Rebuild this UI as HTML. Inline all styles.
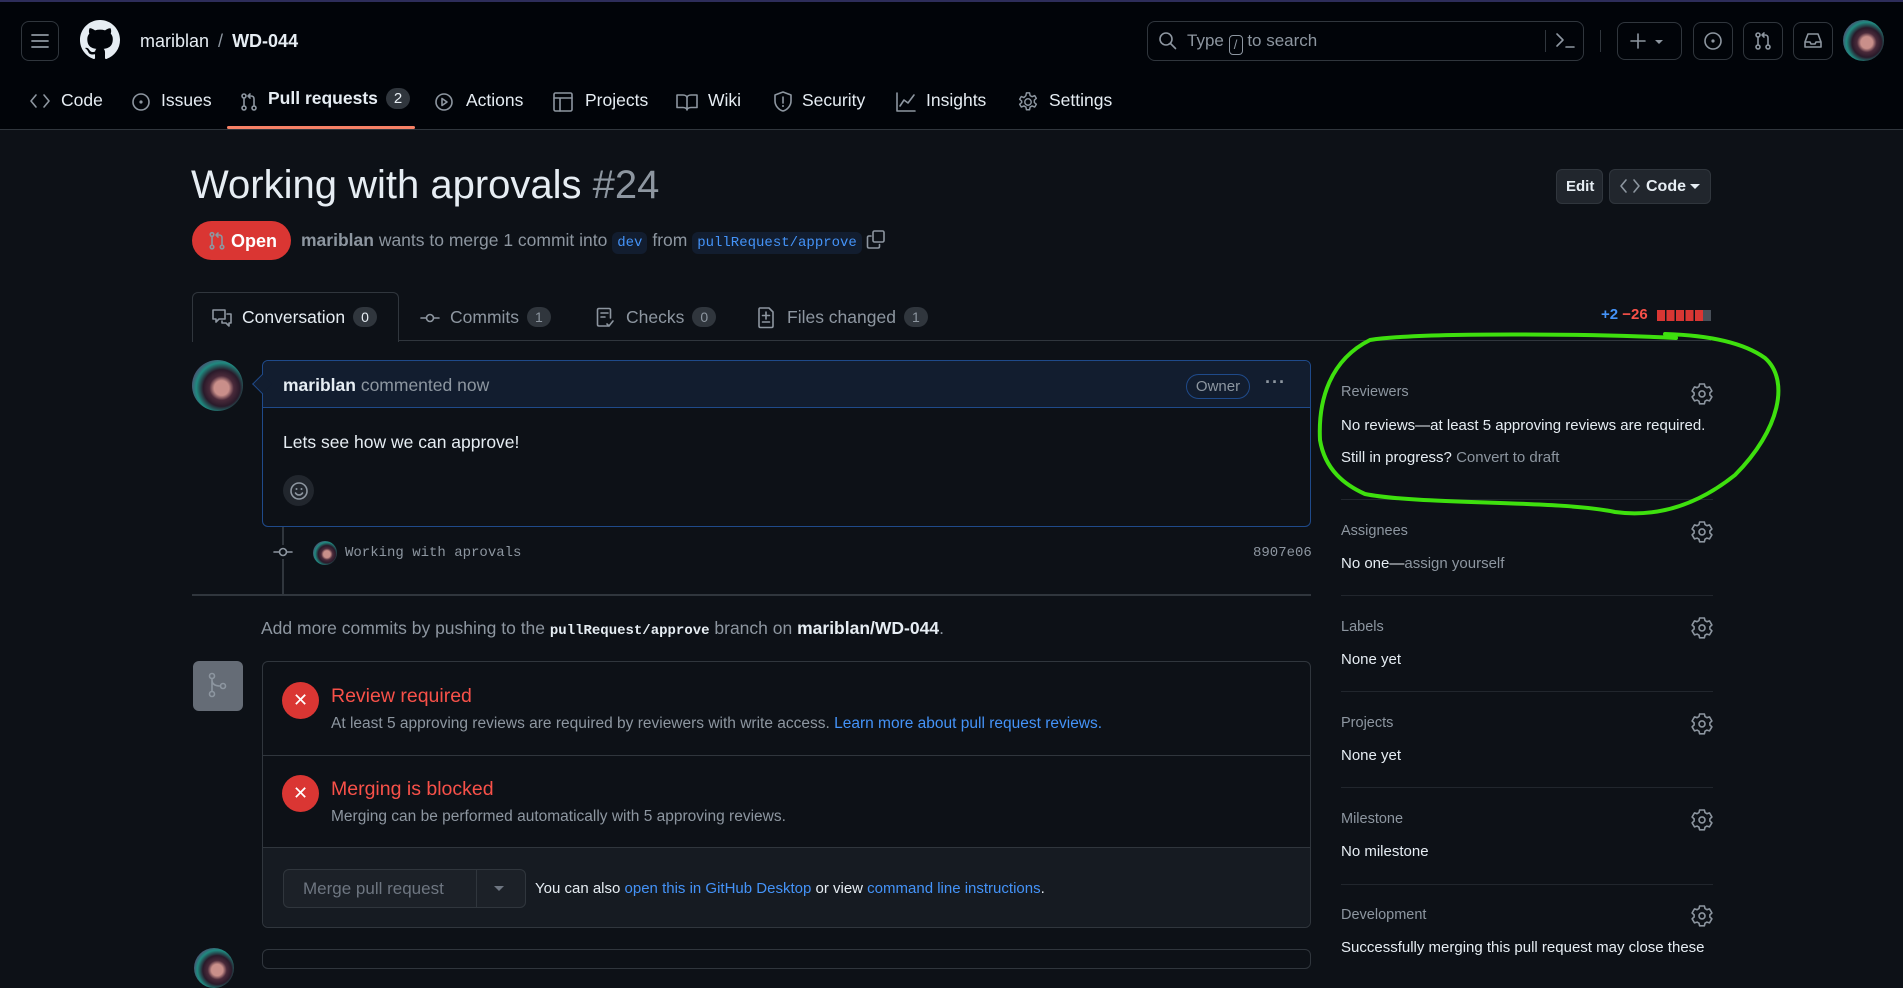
<!DOCTYPE html>
<html><head><meta charset="utf-8">
<style>
*{box-sizing:border-box;margin:0;padding:0}
body{width:1903px;height:957px;overflow:hidden;background:#0d1117;color:#e6edf3;font-family:"Liberation Sans",sans-serif;position:relative}
.a{position:absolute;white-space:nowrap}
.hdr{position:absolute;left:0;top:0;width:1903px;height:130px;background:#010409;border-bottom:1px solid #30363d;border-top:2px solid #2d2d5a}
.btn{position:absolute;border:1px solid #30363d;border-radius:8px}
svg{position:absolute;overflow:visible}
.nav{position:absolute;top:90px;font-size:17.5px;color:#e6edf3}
.ic{stroke:#8d96a0;fill:none;stroke-width:1.6;stroke-linecap:round;stroke-linejoin:round}
.cnt{display:inline-block;background:#30363d;color:#e6edf3;border-radius:12px;font-size:14px;padding:2px 8px;margin-left:8px;vertical-align:1px}
.sh{position:absolute;left:1341px;font-size:14.5px;color:#8d96a0}
.st{position:absolute;left:1341px;font-size:15px;color:#e6edf3}
.div{position:absolute;left:1341px;width:372px;height:1px;background:#21262d}
.gear{position:absolute;left:1693px}
.mono{font-family:"Liberation Mono",monospace}
.blue{color:#4493f8}
.av{background:radial-gradient(circle at 58% 55%,#c98f8a 0 18%,#4a2a3a 30%,#2a1a2a 45%,#1f8a80 62%,#5a3a6a 80%,#2a2030 100%)}
</style></head><body>
<div class="hdr"></div>
<div class="btn" style="left:21px;top:21px;width:38px;height:40px"></div>
<svg style="left:31px;top:33px" width="18" height="16"><path d="M1 2h16M1 8h16M1 14h16" stroke="#8d96a0" stroke-width="1.8" stroke-linecap="round"/></svg>
<svg style="left:80px;top:20px" width="40" height="40" viewBox="0 0 16 16"><path fill="#e6edf3" d="M8 0C3.58 0 0 3.580 0 8c0 3.54 2.29 6.53 5.470 7.59.4.07.55-.17.55-.38 0-.19-.01-.82-.01-1.49-2.01.37-2.53-.49-2.69-.94-.09-.23-.48-.94-.82-1.130-.28-.15-.68-.52-.01-.53.63-.01 1.08.58 1.23.82.72 1.21 1.87.87 2.33.66.07-.52.28-.87.51-1.07-1.78-.2-3.64-.89-3.64-3.95 0-.87.31-1.59.82-2.15-.08-.2-.36-1.02.08-2.12 0 0 .67-.21 2.2.82.64-.18 1.32-.27 2-.27.68 0 1.36.09 2 .27 1.53-1.04 2.2-.82 2.2-.82.44 1.1.16 1.92.08 2.12.51.56.82 1.27.82 2.15 0 3.07-1.87 3.75-3.65 3.95.29.25.54.73.54 1.48 0 1.07-.01 1.93-.01 2.2 0 .21.15.46.55.38A8.013 8.013 0 0016 8c0-4.42-3.58-8-8-8z"/></svg>
<div class="a" style="left:140px;top:31px;font-size:18px">mariblan <span style="color:#8d96a0;margin:0 4px">/</span> <b>WD-044</b></div>

<div class="btn" style="left:1147px;top:21px;width:437px;height:40px"></div>
<svg style="left:1158px;top:31px" width="20" height="20"><circle cx="8" cy="8" r="6" class="ic"/><path d="M12.5 12.5l5 5" class="ic"/></svg>
<div class="a" style="left:1187px;top:31px;font-size:17px;color:#8d96a0">Type <span style="display:inline-block;border:1px solid #8d96a0;border-radius:4px;width:14px;height:20px;font-size:13px;text-align:center;vertical-align:-3px;line-height:18px">/</span> to search</div>
<div class="a" style="left:1545px;top:30px;width:1px;height:22px;background:#30363d"></div>
<svg style="left:1556px;top:33px" width="20" height="16"><path d="M1 1l6 6-6 6M10 14h8" class="ic"/></svg>
<div class="a" style="left:1600px;top:30px;width:1px;height:22px;background:#30363d"></div>
<div class="btn" style="left:1617px;top:22px;width:65px;height:38px"></div>
<svg style="left:1630px;top:33px" width="40" height="16"><path d="M8 1v14M1 8h14" class="ic"/><path d="M25 7h8l-4 4z" fill="#8d96a0"/></svg>
<div class="btn" style="left:1693px;top:22px;width:40px;height:38px"></div>
<svg style="left:1703px;top:31px" width="20" height="20"><circle cx="10" cy="10" r="8" class="ic"/><circle cx="10" cy="10" r="1.6" fill="#8d96a0"/></svg>
<div class="btn" style="left:1743px;top:22px;width:40px;height:38px"></div>
<svg style="left:1753px;top:31px" width="20" height="20"><circle cx="5" cy="4" r="2" class="ic"/><circle cx="5" cy="16" r="2" class="ic"/><circle cx="15" cy="16" r="2" class="ic"/><path d="M5 6v8M15 14V7c0-2-1-3-3-3H9M11 2L9 4l2 2" class="ic"/></svg>
<div class="btn" style="left:1793px;top:22px;width:40px;height:38px"></div>
<svg style="left:1803px;top:31px" width="20" height="20"><path d="M2 11l3-8h10l3 8v5H2zM2 11h5l1 2h4l1-2h5" class="ic"/></svg>
<div class="a av" style="left:1843px;top:20px;width:41px;height:41px;border-radius:50%"></div>

<!-- nav -->
<svg style="left:30px;top:93px" width="20" height="16"><path d="M6 2L1 8l5 6M14 2l5 6-5 6" class="ic"/></svg>
<div class="nav" style="left:61px">Code</div>
<svg style="left:131px;top:92px" width="20" height="20"><circle cx="10" cy="10" r="8" class="ic"/><circle cx="10" cy="10" r="1.6" fill="#8d96a0"/></svg>
<div class="nav" style="left:161px">Issues</div>
<svg style="left:239px;top:92px" width="20" height="20"><circle cx="5" cy="4" r="2" class="ic"/><circle cx="5" cy="16" r="2" class="ic"/><circle cx="15" cy="16" r="2" class="ic"/><path d="M5 6v8M15 14V7c0-2-1-3-3-3H9M11 2L9 4l2 2" class="ic"/></svg>
<div class="nav" style="left:268px;top:88px;font-weight:bold">Pull requests<span class="cnt" style="font-weight:normal;font-size:15px">2</span></div>
<div class="a" style="left:227px;top:126px;width:188px;height:3px;background:#f78166;border-radius:2px"></div>
<svg style="left:434px;top:92px" width="20" height="20"><circle cx="10" cy="10" r="8" class="ic"/><path d="M8 6.5v7l5-3.5z" class="ic"/></svg>
<div class="nav" style="left:466px">Actions</div>
<svg style="left:553px;top:92px" width="20" height="20"><rect x="1" y="1" width="18" height="18" rx="1.5" class="ic"/><path d="M1 6h18M7 6v13" class="ic"/></svg>
<div class="nav" style="left:585px">Projects</div>
<svg style="left:676px;top:93px" width="22" height="18"><path d="M1 2h6c2 0 4 1 4 3v12c0-1.5-2-2.5-4-2.5H1zM21 2h-6c-2 0-4 1-4 3v12c0-1.5 2-2.5 4-2.5h6z" class="ic"/></svg>
<div class="nav" style="left:708px">Wiki</div>
<svg style="left:773px;top:91px" width="20" height="22"><path d="M10 1l8 3v6c0 5-4 9-8 10-4-1-8-5-8-10V4z" class="ic"/><path d="M10 6v6" class="ic"/><circle cx="10" cy="15" r="1" fill="#8d96a0"/></svg>
<div class="nav" style="left:802px">Security</div>
<svg style="left:896px;top:92px" width="20" height="20"><path d="M1 1v18h18M4 14l4-6 4 3 6-8" class="ic"/></svg>
<div class="nav" style="left:926px">Insights</div>
<svg style="left:1017px;top:91px" width="22" height="22" viewBox="0 0 24 24"><path d="M10.3 2h3.4l.6 3 2.2 1.2 2.8-1.2 1.8 3-2.2 2 .0 2.5 2.2 2-1.8 3-2.8-1.2-2.2 1.2-.6 3h-3.4l-.6-3-2.2-1.2-2.8 1.2-1.8-3 2.2-2V11l-2.2-2 1.8-3 2.8 1.2L9.7 5z" class="ic"/><circle cx="12" cy="12" r="3.5" class="ic"/></svg>
<div class="nav" style="left:1049px">Settings</div>

<!-- title -->
<div class="a" style="left:191px;top:163px;font-size:40px;color:#e6edf3">Working with aprovals <span style="color:#8d96a0">#24</span></div>
<div class="btn" style="left:1556px;top:169px;width:47px;height:35px;background:#21262d;border-radius:6px"></div>
<div class="a" style="left:1566px;top:178px;font-size:15px;font-weight:bold">Edit</div>
<div class="btn" style="left:1609px;top:169px;width:102px;height:35px;background:#21262d;border-radius:6px"></div>
<svg style="left:1620px;top:179px" width="20" height="14"><path d="M6 1L1 7l5 6M14 1l5 6-5 6" class="ic" stroke="#e6edf3"/></svg>
<div class="a" style="left:1646px;top:178px;font-size:16px;font-weight:bold">Code</div>
<svg style="left:1690px;top:184px" width="10" height="6"><path d="M0 0h10L5 5z" fill="#e6edf3"/></svg>

<div class="a" style="left:192px;top:221px;width:99px;height:39px;background:#da3633;border-radius:20px"></div>
<svg style="left:208px;top:231px" width="18" height="20"><circle cx="4" cy="3.5" r="1.8" class="ic" stroke="#fff"/><circle cx="4" cy="16" r="1.8" class="ic" stroke="#fff"/><circle cx="14" cy="16" r="1.8" class="ic" stroke="#fff"/><path d="M4 5.5v8.5M14 14V7c0-2-1-3-3-3H8M10 2L8 4l2 2" class="ic" stroke="#fff"/></svg>
<div class="a" style="left:231px;top:231px;font-size:18px;font-weight:bold;color:#fff">Open</div>
<div class="a" style="left:301px;top:230px;font-size:17.5px;color:#8d96a0"><b style="color:#8d96a0">mariblan</b> wants to merge 1 commit into <span class="mono" style="background:#121d2f;color:#4493f8;padding:3px 5px;border-radius:6px;font-size:14px">dev</span> from <span class="mono" style="background:#121d2f;color:#4493f8;padding:3px 5px;border-radius:6px;font-size:14px">pullRequest/approve</span></div>
<svg style="left:866px;top:230px" width="20" height="20"><rect x="7" y="1" width="11" height="11" rx="1.5" class="ic"/><path d="M5 6H3c-1 0-1.5.5-1.5 1.5v9c0 1 .5 1.5 1.5 1.5h9c1 0 1.5-.5 1.5-1.5v-2" class="ic"/></svg>

<!-- tabs -->
<div class="a" style="left:192px;top:340px;width:1519px;height:1px;background:#30363d"></div>
<div class="a" style="left:192px;top:292px;width:207px;height:50px;border:1px solid #30363d;border-bottom:none;border-radius:6px 6px 0 0;background:#0d1117"></div>
<svg style="left:212px;top:308px" width="20" height="20"><path d="M1 2h12v9H7l-3 3v-3H1zM15 6h4v9h-2v3l-3-3h-4v-2" class="ic"/></svg>
<div class="a" style="left:242px;top:307px;font-size:17.5px">Conversation<span class="cnt">0</span></div>
<svg style="left:420px;top:313px" width="20" height="10"><circle cx="10" cy="5" r="3.5" class="ic"/><path d="M1 5h5.5M13.5 5H19" class="ic"/></svg>
<div class="a" style="left:450px;top:307px;font-size:17.5px;color:#8d96a0">Commits<span class="cnt" style="color:#8d96a0">1</span></div>
<svg style="left:596px;top:307px" width="20" height="22"><path d="M13 19H3c-1 0-1.5-.5-1.5-1.5V3c0-1 .5-1.5 1.5-1.5h10c1 0 1.5.5 1.5 1.5v8M5 6h7M5 10h4M11 17l2 2 4-5" class="ic"/></svg>
<div class="a" style="left:626px;top:307px;font-size:17.5px;color:#8d96a0">Checks<span class="cnt" style="color:#8d96a0">0</span></div>
<svg style="left:757px;top:307px" width="18" height="22"><path d="M3 1h9l4 4v14c0 1-.5 1.5-1.5 1.5h-11C2.5 20.5 2 20 2 19V2.5C2 1.5 2.5 1 3 1zM9 5v7M5.5 8.5h7M5.5 15h7" class="ic"/></svg>
<div class="a" style="left:787px;top:307px;font-size:17.5px;color:#8d96a0">Files changed<span class="cnt" style="color:#8d96a0">1</span></div>
<div class="a" style="left:1601px;top:306px;font-size:15px;font-weight:bold"><span style="color:#4493f8">+2</span> <span style="color:#f85149">−26</span></div>
<div class="a" style="left:1657px;top:310px;width:47px;height:11px;background:repeating-linear-gradient(90deg,#da3633 0 8px,transparent 8px 9.5px)"></div>
<div class="a" style="left:1703px;top:310px;width:8px;height:11px;background:#484f58"></div>

<!-- comment -->
<div class="a av" style="left:192px;top:360px;width:51px;height:51px;border-radius:50%"></div>
<div class="a" style="left:262px;top:360px;width:1049px;height:167px;border:1px solid #1f4a8a;border-radius:6px"></div>
<div class="a" style="left:263px;top:361px;width:1047px;height:47px;background:#121d2f;border-bottom:1px solid #1f4a8a;border-radius:6px 6px 0 0"></div>
<div class="a" style="left:255px;top:377px;width:14px;height:14px;background:#121d2f;border-left:1px solid #1f4a8a;border-bottom:1px solid #1f4a8a;transform:rotate(45deg)"></div>
<div class="a" style="left:283px;top:375px;font-size:17.5px;color:#8d96a0"><b style="color:#e6edf3">mariblan</b> commented now</div>
<div class="a" style="left:1186px;top:374px;width:64px;height:25px;border:1px solid #1f4a8a;border-radius:13px;font-size:15px;color:#8d96a0;text-align:center;line-height:23px">Owner</div>
<div class="a" style="left:1265px;top:372px;font-size:18px;color:#8d96a0;font-weight:bold;letter-spacing:1px">···</div>
<div class="a" style="left:283px;top:432px;font-size:17.5px">Lets see how we can approve!</div>
<div class="a" style="left:283px;top:475px;width:31px;height:31px;border-radius:50%;background:#21262d"></div>
<svg style="left:289px;top:481px" width="20" height="20"><circle cx="10" cy="10" r="8" class="ic"/><path d="M6.5 12c1 1.5 2 2 3.5 2s2.5-.5 3.5-2" class="ic"/><circle cx="7.5" cy="8" r="1" fill="#8d96a0"/><circle cx="12.5" cy="8" r="1" fill="#8d96a0"/></svg>

<div class="a" style="left:282px;top:527px;width:2px;height:68px;background:#30363d"></div>
<div class="a" style="left:275px;top:545px;width:16px;height:14px;background:#0d1117"></div>
<svg style="left:273px;top:546px" width="20" height="12"><circle cx="10" cy="6" r="3.5" class="ic"/><path d="M1 6h5.5M13.5 6H19" class="ic"/></svg>
<div class="a av" style="left:313px;top:541px;width:24px;height:24px;border-radius:50%"></div>
<div class="a mono" style="left:345px;top:545px;font-size:14px;color:#8d96a0">Working with aprovals</div>
<div class="a mono" style="left:1253px;top:545px;font-size:14px;color:#8d96a0">8907e06</div>
<div class="a" style="left:192px;top:594px;width:1119px;height:2px;background:#30363d"></div>

<div class="a" style="left:261px;top:618px;font-size:17.5px;color:#8d96a0">Add more commits by pushing to the <b class="mono" style="color:#e6edf3;font-size:14px">pullRequest/approve</b> branch on <b style="color:#e6edf3">mariblan/WD-044</b>.</div>

<!-- merge box -->
<div class="a" style="left:193px;top:661px;width:50px;height:50px;border-radius:6px;background:#656c76"></div>
<svg style="left:206px;top:672px" width="24" height="28"><circle cx="6" cy="4" r="2.5" class="ic" stroke="#fff"/><circle cx="6" cy="22" r="2.5" class="ic" stroke="#fff"/><circle cx="17" cy="14" r="2.5" class="ic" stroke="#fff"/><path d="M6 6.5v13M6 8c0 4 3 6 8.5 6" class="ic" stroke="#fff"/></svg>
<div class="a" style="left:262px;top:661px;width:1049px;height:267px;border:1px solid #30363d;border-radius:6px"></div>
<div class="a" style="left:263px;top:847px;width:1047px;height:80px;background:#161b22;border-top:1px solid #30363d;border-radius:0 0 6px 6px"></div>
<div class="a" style="left:263px;top:755px;width:1047px;height:1px;background:#30363d"></div>
<div class="a" style="left:282px;top:682px;width:37px;height:37px;border-radius:50%;background:#da3633;color:#fff;text-align:center;line-height:36px;font-size:18px">✕</div>
<div class="a" style="left:331px;top:685px;font-size:19.5px;color:#f85149">Review required</div>
<div class="a" style="left:331px;top:715px;font-size:15.5px;color:#8d96a0">At least 5 approving reviews are required by reviewers with write access. <span class="blue">Learn more about pull request reviews.</span></div>
<div class="a" style="left:282px;top:775px;width:37px;height:37px;border-radius:50%;background:#da3633;color:#fff;text-align:center;line-height:36px;font-size:18px">✕</div>
<div class="a" style="left:331px;top:778px;font-size:19.5px;color:#f85149">Merging is blocked</div>
<div class="a" style="left:331px;top:808px;font-size:15.5px;color:#8d96a0">Merging can be performed automatically with 5 approving reviews.</div>
<div class="a" style="left:283px;top:869px;width:243px;height:39px;border:1px solid #30363d;border-radius:6px;background:#1c2128"></div>
<div class="a" style="left:476px;top:870px;width:1px;height:37px;background:#30363d"></div>
<div class="a" style="left:303px;top:879px;font-size:17px;color:#6e7681">Merge pull request</div>
<svg style="left:494px;top:886px" width="10" height="6"><path d="M0 0h10L5 5z" fill="#6e7681"/></svg>
<div class="a" style="left:535px;top:880px;font-size:15px;color:#e6edf3">You can also <span class="blue">open this in GitHub Desktop</span> or view <span class="blue">command line instructions</span>.</div>
<div class="a" style="left:262px;top:949px;width:1049px;height:20px;border:1px solid #30363d;border-radius:6px"></div>
<div class="a av" style="left:194px;top:948px;width:40px;height:40px;border-radius:50%"></div>

<!-- sidebar -->
<svg width="0" height="0"><defs><g id="gr"><path d="M7.6 1h4.8l.6 2.6 1.9 1.1 2.6-.8 2.4 4.1-2 1.8v2.2l2 1.8-2.4 4.1-2.6-.8-1.9 1.1-.6 2.6H7.6L7 18.2l-1.9-1.1-2.6.8L.1 13.8l2-1.8V9.8l-2-1.8 2.4-4.1 2.6.8L7 3.6z" class="ic"/><circle cx="10" cy="10.9" r="3" class="ic"/></g></defs></svg>
<div class="sh" style="top:384px">Reviewers</div>
<svg class="gear" style="top:383px;left:1692px" width="20" height="22"><use href="#gr"/></svg>
<div class="st" style="top:417px">No reviews—at least 5 approving reviews are required.</div>
<div class="st" style="top:449px">Still in progress? <span style="color:#8d96a0">Convert to draft</span></div>
<div class="div" style="top:499px"></div>
<div class="sh" style="top:523px">Assignees</div>
<svg class="gear" style="top:521px;left:1692px" width="20" height="22"><use href="#gr"/></svg>
<div class="st" style="top:555px">No one—<span style="color:#8d96a0">assign yourself</span></div>
<div class="div" style="top:595px"></div>
<div class="sh" style="top:619px">Labels</div>
<svg class="gear" style="top:617px;left:1692px" width="20" height="22"><use href="#gr"/></svg>
<div class="st" style="top:651px">None yet</div>
<div class="div" style="top:691px"></div>
<div class="sh" style="top:715px">Projects</div>
<svg class="gear" style="top:713px;left:1692px" width="20" height="22"><use href="#gr"/></svg>
<div class="st" style="top:747px">None yet</div>
<div class="div" style="top:787px"></div>
<div class="sh" style="top:811px">Milestone</div>
<svg class="gear" style="top:809px;left:1692px" width="20" height="22"><use href="#gr"/></svg>
<div class="st" style="top:843px">No milestone</div>
<div class="div" style="top:884px"></div>
<div class="sh" style="top:907px">Development</div>
<svg class="gear" style="top:905px;left:1692px" width="20" height="22"><use href="#gr"/></svg>
<div class="st" style="top:939px">Successfully merging this pull request may close these</div>

<!-- green annotation -->
<svg style="left:0;top:0" width="1903" height="957"><path d="M1676 338 C1600 334 1420 332 1370 340 C1330 360 1318 400 1320 440 C1325 470 1345 485 1365 494 C1420 505 1560 500 1615 512 C1660 518 1700 503 1735 475 C1780 430 1790 380 1765 358 C1740 340 1700 335 1665 334" fill="none" stroke="#3ee00e" stroke-width="4" stroke-linecap="round"/></svg>
</body></html>
